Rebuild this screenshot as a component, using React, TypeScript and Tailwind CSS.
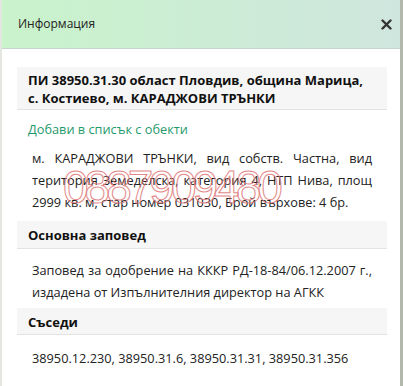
import React from "react";

const font = { fontFamily: "'Open Sans', 'Noto Sans', sans-serif" };

const SectionTitle = ({ children, tight }: { children: React.ReactNode; tight?: boolean }) => (
  <div
    className={
      "bg-[#f6f6f6] border-b border-[#e3e3e3] px-[11px] text-[13px] leading-[18px] font-bold text-[#111] " +
      (tight ? "pt-[5px] pb-[3px]" : "pt-[5px] pb-[4px]")
    }
  >
    {children}
  </div>
);

export default function App() {
  return (
    <div className="w-[403px] h-[386px] flex bg-white text-[#222]" style={font}>
      <div className="w-[400px] h-full flex flex-col border-l-2 border-[#e4e6e1]">
        <div className="h-[49px] shrink-0 flex items-center justify-between pl-[16px] pr-[4px] border-b border-[#c9d3cc] bg-gradient-to-r from-[#c9f3cb] to-[#cfe6de]">
          <span className="text-[12px] text-[#222]">Информация</span>
          <button className="w-5 h-5 flex items-center justify-center text-[#333]">
            <svg width="11" height="11" viewBox="0 0 11 11">
              <path d="M1.5 1.5 L9.5 9.5 M9.5 1.5 L1.5 9.5" stroke="currentColor" strokeWidth="2.4" strokeLinecap="round" />
            </svg>
          </button>
        </div>

        <div className="relative pl-[15px] pr-[13px] pt-[18px] text-[12.75px]">
          <div className="bg-[#f6f6f6] border-b border-[#e3e3e3] px-[11px] pt-[4px] pb-[2px] text-[13px] leading-[18px] font-bold text-[#111]">
            ПИ 38950.31.30 област Пловдив, община Марица, с. Костиево, м. КАРАДЖОВИ ТРЪНКИ
          </div>

          <a className="block mt-[10px] px-[11px] leading-[18px] text-[#1f9a6c] cursor-pointer">
            Добави в списък с обекти
          </a>

          <p className="mt-[9px] px-[15px] leading-[22px] text-justify">
            м. КАРАДЖОВИ ТРЪНКИ, вид собств. Частна, вид територия Земеделска, категория 4, НТП Нива, площ 2999 кв. м, стар номер 031030, Брой върхове: 4 бр.
          </p>

          <div className="mt-[8px]">
            <SectionTitle>Основна заповед</SectionTitle>
          </div>
          <p className="mt-[10px] px-[15px] leading-[22px] text-justify">
            Заповед за одобрение на КККР РД-18-84/06.12.2007 г., издадена от Изпълнителния директор на АГКК
          </p>

          <div className="mt-[5px]">
            <SectionTitle tight>Съседи</SectionTitle>
          </div>
          <p className="mt-[13px] px-[15px] leading-[20px]">
            38950.12.230, 38950.31.6, 38950.31.31, 38950.31.356
          </p>

          <div
            className="absolute left-[61px] top-[113px] text-[46px] leading-[50px] tracking-[-4px] text-transparent [-webkit-text-stroke:1px_#e07b7b] opacity-90 pointer-events-none select-none"
            style={{ fontFamily: "'Liberation Sans', Arial, sans-serif" }}
          >
            0887909480
          </div>
        </div>
      </div>
      <div className="w-[3px] h-full bg-[#b3b8ad]" />
    </div>
  );
}
